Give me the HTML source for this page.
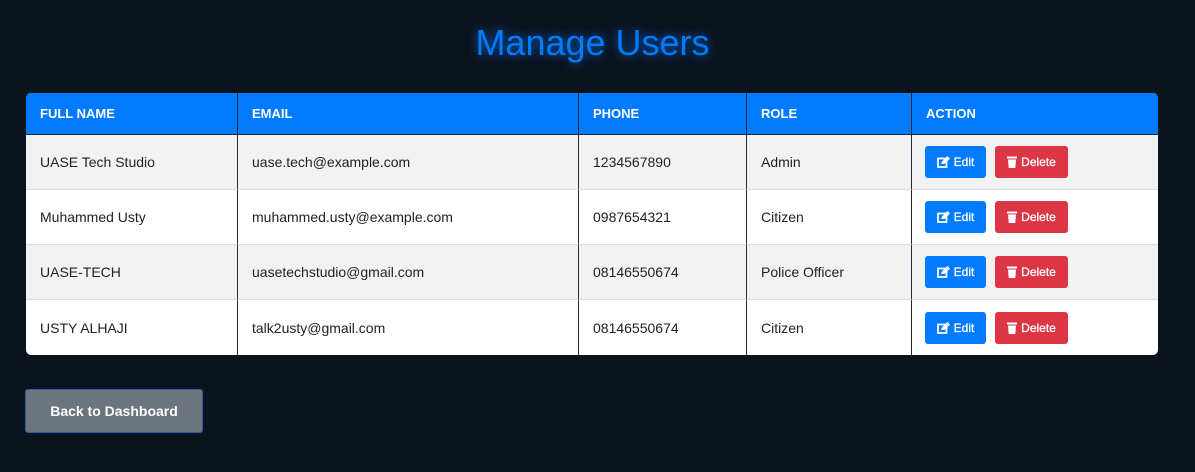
<!DOCTYPE html>
<html><head><style>
body{margin:0;width:1195px;height:472px;background:#0b131d;font-family:"Liberation Sans",Arial,sans-serif;overflow:hidden;position:relative}
h1{position:absolute;top:22px;left:0;width:1185px;text-align:center;margin:0;font-weight:normal;font-size:36px;color:#007bff;text-shadow:0 0 10px rgba(0,123,255,.8)}
table{position:absolute;left:26px;top:93px;width:1132px;border-collapse:separate;border-spacing:0;border-radius:5px;overflow:hidden;background:#fff}
th{background:#007bff;color:#fff;font-size:13px;font-weight:bold;text-align:left;height:41px;padding:0 0 0 14px;border-bottom:1px solid #1c2a3a}
td{font-size:14px;color:#222;height:54px;padding:0 0 0 14px;border-bottom:1px solid #ddd}
tr:last-child td{border-bottom:none;height:55px}
th+th,td+td{border-left:1px solid #1c2a3a}
tbody tr:nth-child(odd) td{background:#f2f2f2}
.b{display:inline-block;height:32px;line-height:32px;border-radius:3px;color:#fff;font-size:12px;vertical-align:middle;-webkit-text-stroke:0.3px #fff}
.e{background:#007bff;width:61px;text-align:center;margin-left:-1px}
.d{background:#dc3545;width:73px;text-align:center;margin-left:9px}
.b svg{vertical-align:-2px;margin-right:4px}
.back{position:absolute;left:25px;top:389px;width:176px;height:42px;background:#6c757d;border:1px solid #2a5fb0;border-radius:3px;color:#fff;font-weight:bold;font-size:14px;text-align:center;line-height:42px}
</style></head><body>
<h1>Manage Users</h1>
<table>
<thead><tr><th style="width:197px">FULL NAME</th><th style="width:326px">EMAIL</th><th style="width:153px">PHONE</th><th style="width:150px">ROLE</th><th>ACTION</th></tr></thead>
<tbody>
<tr><td>UASE Tech Studio</td><td>uase.tech@example.com</td><td>1234567890</td><td>Admin</td><td>BTN</td></tr>
<tr><td>Muhammed Usty</td><td>muhammed.usty@example.com</td><td>0987654321</td><td>Citizen</td><td>BTN</td></tr>
<tr><td>UASE-TECH</td><td>uasetechstudio@gmail.com</td><td>08146550674</td><td>Police Officer</td><td>BTN</td></tr>
<tr><td>USTY ALHAJI</td><td>talk2usty@gmail.com</td><td>08146550674</td><td>Citizen</td><td>BTN</td></tr>
</tbody></table>
<div class="back">Back to Dashboard</div>
<script>
document.querySelectorAll('td').forEach(function(t){if(t.textContent==='BTN'){t.innerHTML='<span class="b e"><svg width="13" height="12" viewBox="0 0 13 12"><rect x="1" y="2.5" width="8.5" height="8.5" fill="none" stroke="#fff" stroke-width="1.8"/><path d="M4 8 L5 5.5 L10.5 0 L13 2.5 L7.5 8 Z" fill="#fff"/></svg>Edit</span><span class="b d"><svg width="10" height="12" viewBox="0 0 10 12"><rect x="0" y="0.5" width="10" height="2" fill="#fff"/><path d="M1 3.5 H9 L8.3 12 H1.7 Z" fill="#fff"/></svg>Delete</span>';}});
</script>
</body></html>
